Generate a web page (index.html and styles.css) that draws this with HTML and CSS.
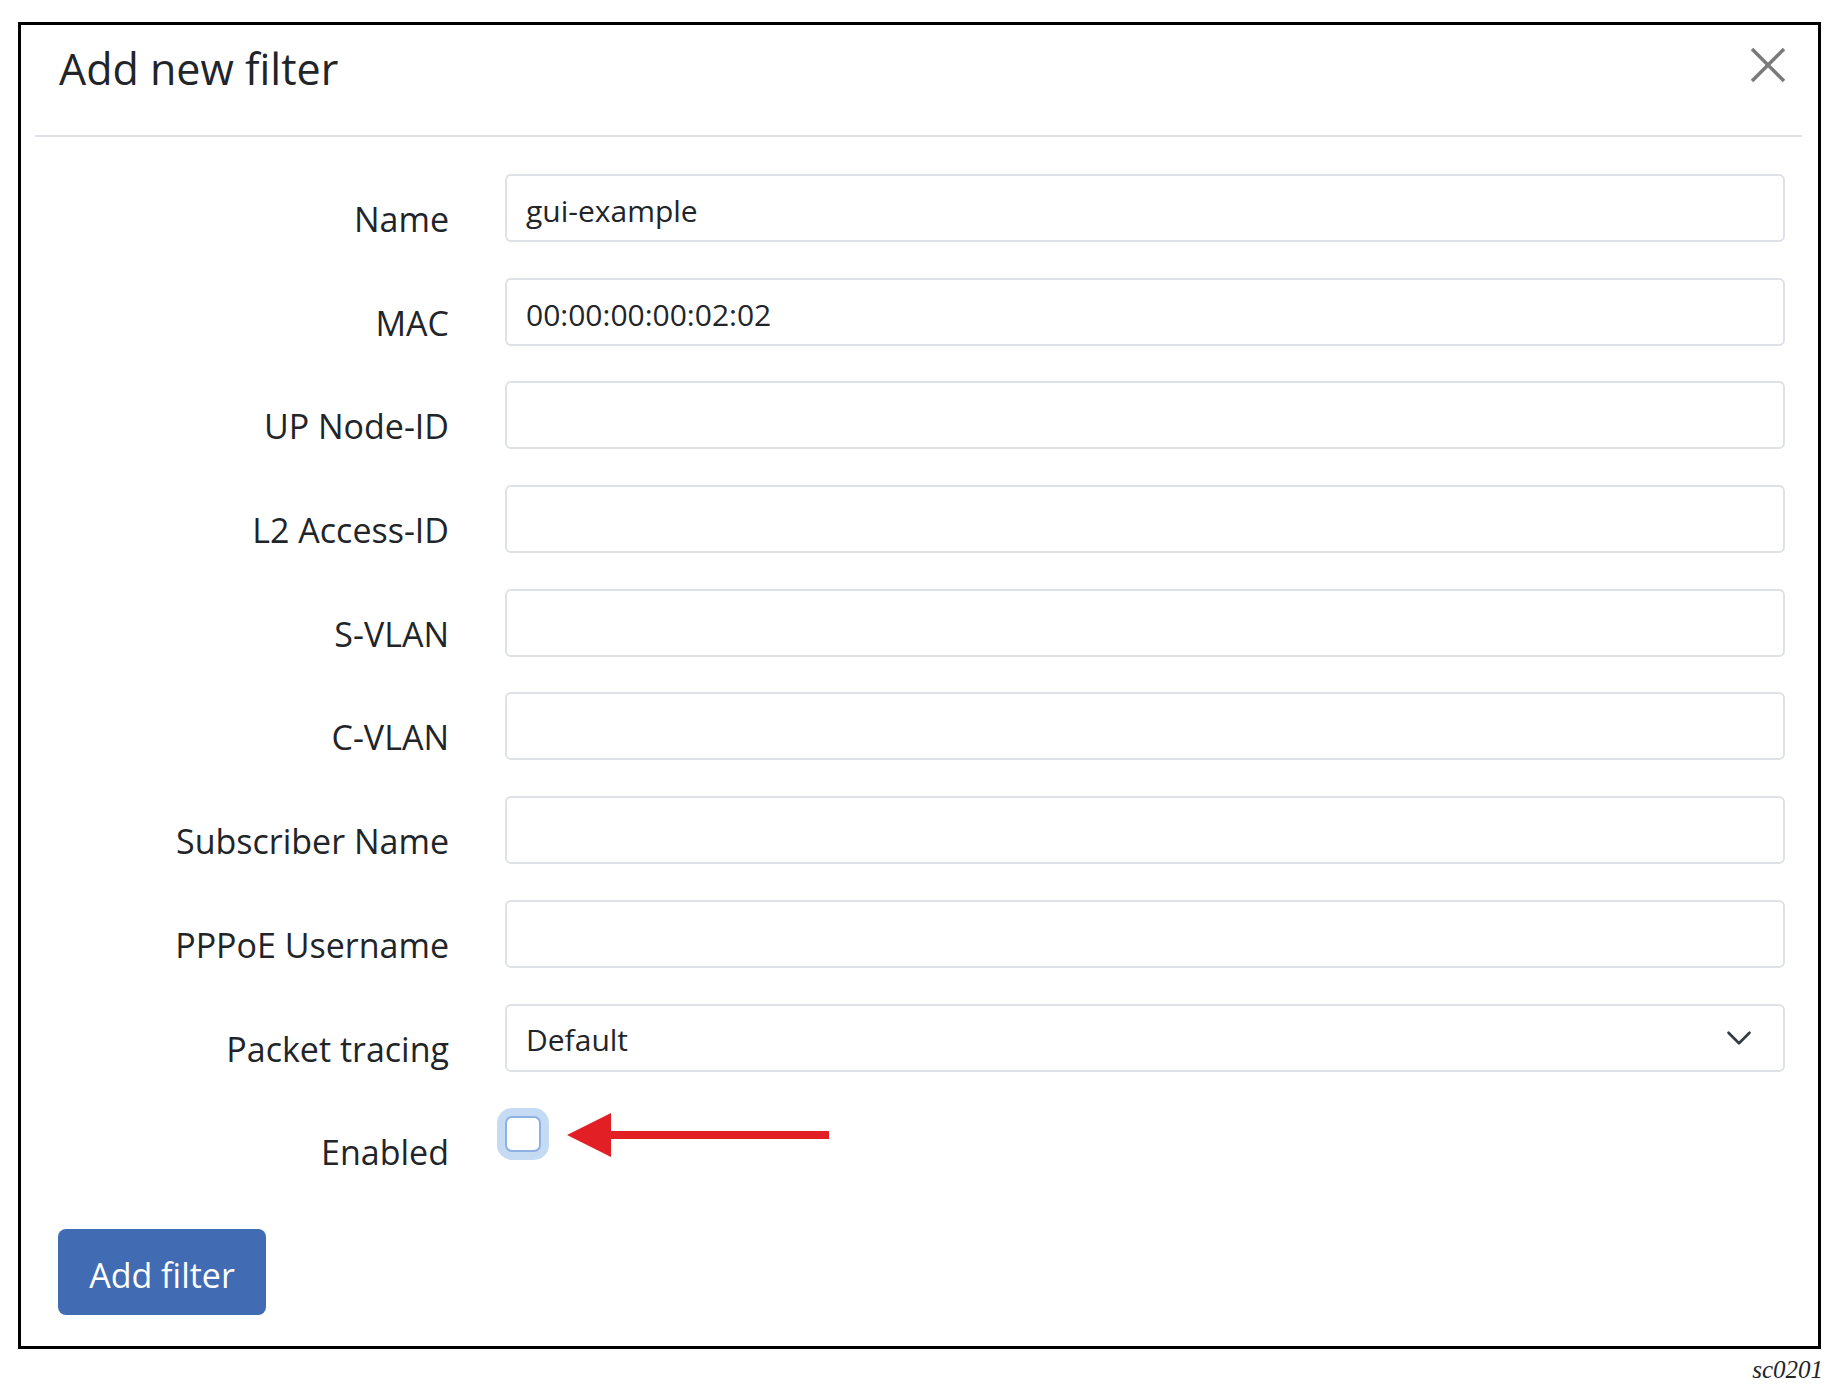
FILE: index.html
```html
<!DOCTYPE html>
<html lang="en">
<head>
<meta charset="utf-8">
<title>Add new filter</title>
<link rel="stylesheet" href="styles.css">
</head>
<body>
<div class="frame">
  <div class="header">
    <h5 class="title">Add new filter</h5>
    <button class="close" type="button" aria-label="Close">
      <svg width="36" height="36" viewBox="0 0 36 36"><path d="M2 2L34 34M34 2L2 34" stroke="#7a7a7a" stroke-width="3.5" fill="none"/></svg>
    </button>
  </div>
  <form class="body">
    <div class="row"><label class="lbl">Name</label><input class="field" type="text" value="gui-example"></div>
    <div class="row"><label class="lbl">MAC</label><input class="field" type="text" value="00:00:00:00:02:02"></div>
    <div class="row"><label class="lbl">UP Node-ID</label><input class="field" type="text" value=""></div>
    <div class="row"><label class="lbl">L2 Access-ID</label><input class="field" type="text" value=""></div>
    <div class="row"><label class="lbl">S-VLAN</label><input class="field" type="text" value=""></div>
    <div class="row"><label class="lbl">C-VLAN</label><input class="field" type="text" value=""></div>
    <div class="row"><label class="lbl">Subscriber Name</label><input class="field" type="text" value=""></div>
    <div class="row"><label class="lbl">PPPoE Username</label><input class="field" type="text" value=""></div>
    <div class="row"><label class="lbl">Packet tracing</label>
      <div class="field select"><span>Default</span>
        <svg class="chev" width="28" height="28" viewBox="0 0 16 16"><path d="M2 5l6 6 6-6" stroke="#343a40" stroke-width="1.5" fill="none" stroke-linecap="round" stroke-linejoin="round"/></svg>
      </div>
    </div>
    <div class="row"><label class="lbl">Enabled</label>
      <div class="check-cell">
        <span class="check"></span>
        <svg class="arrow" width="262" height="46" viewBox="0 0 262 46"><polygon points="0,23 44,1 44,45" fill="#e31f26"/><rect x="40" y="19" width="222" height="8" fill="#e31f26"/></svg>
      </div>
    </div>
    <button class="btn" type="button">Add filter</button>
  </form>
</div>
<div class="code">sc0201</div>
</body>
</html>
```
FILE: styles.css
```css
html, body {
  margin: 0;
  padding: 0;
  background: #ffffff;
}
body {
  font-family: "Open Sans", "Noto Sans", sans-serif;
  color: #212529;
}
.frame {
  box-sizing: border-box;
  width: 1803px;
  height: 1327px;
  margin: 22px 0 0 18px;
  border: 3px solid #000;
  background: #fff;
}
.header {
  box-sizing: border-box;
  height: 112px;
  margin: 0 16px 0 14px;
  padding: 0 16px 0 24px;
  border-bottom: 2px solid #dee2e6;
  display: flex;
  justify-content: space-between;
  align-items: flex-start;
}
.title {
  margin: 0;
  padding-top: 18px;
  font-size: 43px;
  font-weight: 400;
  line-height: 1.2;
}
.close {
  margin-top: 22px;
  padding: 0;
  border: 0;
  background: none;
  width: 36px;
  height: 36px;
  display: block;
}
.close svg { display: block; }
.body {
  margin: 0;
  padding-top: 37px;
  display: flex;
  flex-direction: column;
  gap: 35.7px;
}
.row {
  display: grid;
  grid-template-columns: 428px 1280px;
  grid-template-rows: 68px;
  column-gap: 56px;
  align-items: start;
}
.lbl {
  display: block;
  box-sizing: border-box;
  height: 68px;
  text-align: right;
  font-size: 34px;
  line-height: 45px;
  padding-top: 23px;
  overflow: visible;
  white-space: nowrap;
}
.field {
  box-sizing: border-box;
  height: 68px;
  width: 1280px;
  margin: 0;
  padding: 5px 19px 0 19px;
  border: 2px solid #dee2e6;
  border-radius: 6px;
  font-family: "Open Sans", "Noto Sans", sans-serif;
  font-size: 30px;
  color: #212529;
  background: #fff;
  outline: none;
}
.select {
  display: flex;
  align-items: center;
  justify-content: space-between;
  padding: 3px 30px 0 19px;
}
.chev { display: block; margin-top: -2px; }
.check-cell {
  position: relative;
  height: 68px;
}
.check {
  display: block;
  box-sizing: border-box;
  width: 36px;
  height: 36px;
  margin-top: 9px;
  border: 2px solid #8db1e2;
  border-radius: 7px;
  background: #fff;
  box-shadow: 0 0 0 8px #c5dbf3;
}
.arrow {
  position: absolute;
  left: 62px;
  top: 5px;
  display: block;
}
.btn {
  align-self: flex-start;
  margin: 18px 0 0 37px;
  width: 208px;
  height: 86px;
  border: 0;
  border-radius: 8px;
  background: #416bb3;
  color: #fff;
  font-family: "Open Sans", "Noto Sans", sans-serif;
  font-size: 34px;
  padding: 6px 0 0 0;
}
.code {
  width: 1823px;
  margin-top: 7px;
  text-align: right;
  font-family: "Liberation Serif", "Times New Roman", serif;
  font-style: italic;
  font-size: 25px;
  line-height: 28px;
}
```
